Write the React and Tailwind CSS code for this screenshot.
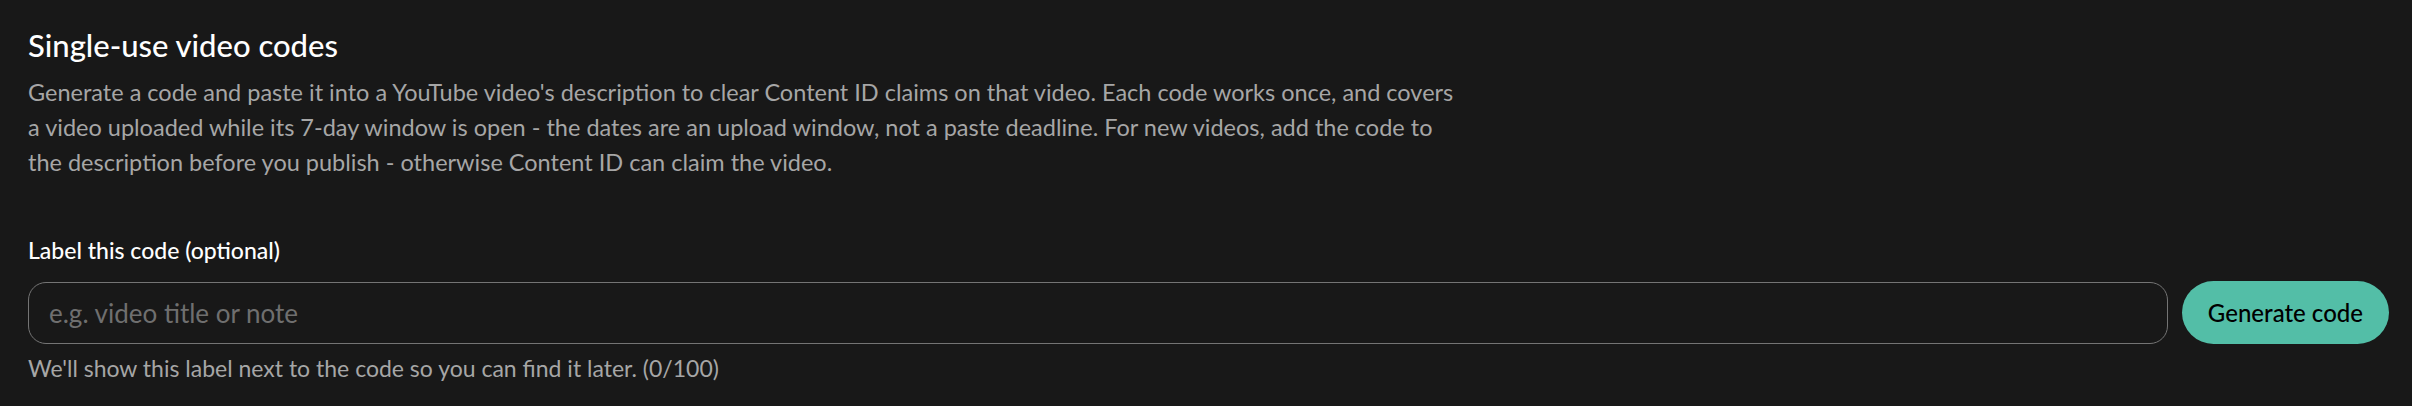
import React, { useState } from 'react'

const App = () => {
    const [label, setLabel] = useState('')

    return (
        <div className="min-h-[406px] w-full bg-[#181818] pl-[28px] pr-[23px] pt-[26px] pb-6 font-['Lato',sans-serif] text-white">
            <h2 className="text-[31px] font-medium leading-[38px] text-white">Single-use video codes</h2>
            <p className="mt-[11px] max-w-[1436px] text-[23.5px] leading-[35px] text-[#a6a6a6]">
                Generate a code and paste it into a YouTube video's description to clear Content ID claims on that video. Each code works once, and covers a video uploaded while its 7-day window is open - the dates are an upload window, not a paste deadline. For new videos, add the code to the description before you publish - otherwise Content ID can claim the video.
            </p>

            <div className="mt-[56px]">
                <label htmlFor="code-label" className="block text-[23px] font-medium leading-[28px] text-white">
                    Label this code (optional)
                </label>
                <div className="mt-[17px] flex items-center gap-[14px]">
                    <input
                        id="code-label"
                        type="text"
                        value={label}
                        maxLength={100}
                        onChange={(e) => setLabel(e.target.value)}
                        placeholder="e.g. video title or note"
                        className="h-[62px] min-w-0 flex-1 rounded-[18px] border border-[#747474] bg-transparent px-[20px] text-[26px] text-white outline-none placeholder:text-[#6f6f6f]"
                    />
                    <button className="h-[63px] shrink-0 rounded-full bg-[#53bea7] px-[26px] text-[24px] font-medium text-black">
                        Generate code
                    </button>
                </div>
                <p className="mt-[10px] text-[23px] leading-[28px] text-[#a6a6a6]">
                    We'll show this label next to the code so you can find it later. ({label.length}/100)
                </p>
            </div>
        </div>
    )
}

export default App
